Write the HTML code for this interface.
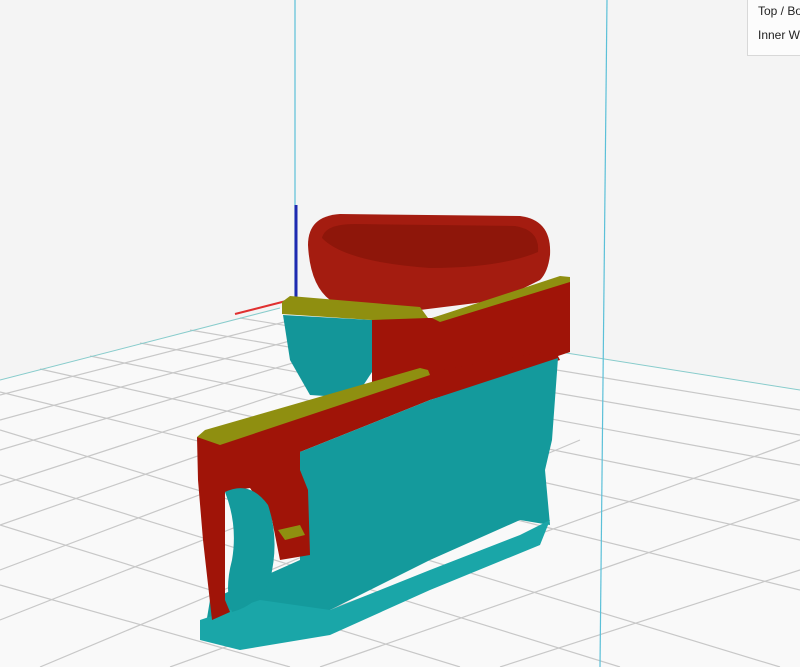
<!DOCTYPE html>
<html><head><style>
html,body{margin:0;padding:0;width:800px;height:667px;overflow:hidden;background:#f4f4f4;font-family:"Liberation Sans",sans-serif}
.leg{position:absolute;left:747px;top:-2px;width:60px;height:56px;background:#fcfcfc;border:1px solid #d8d8d8;font-size:12px;color:#222}
.leg div{position:absolute;left:10px;white-space:nowrap}
</style></head><body>
<svg width="800" height="667" style="position:absolute;left:0;top:0">
<polygon points="0,380 280,308 800,390 800,667 0,667" fill="#f9f9f9"/>
<g stroke="#c8c8c8" stroke-width="1.2" fill="none">
<line x1="0" y1="395" x2="300" y2="318"/><line x1="0" y1="420" x2="330" y2="330"/>
<line x1="0" y1="450" x2="360" y2="343"/><line x1="0" y1="485" x2="390" y2="358"/>
<line x1="0" y1="525" x2="430" y2="375"/><line x1="0" y1="570" x2="470" y2="393"/>
<line x1="0" y1="620" x2="520" y2="415"/><line x1="40" y1="667" x2="580" y2="440"/>
<line x1="170" y1="667" x2="800" y2="440"/><line x1="320" y1="667" x2="800" y2="500"/>
<line x1="500" y1="667" x2="800" y2="570"/>
<line x1="240" y1="318" x2="800" y2="410"/><line x1="190" y1="330" x2="800" y2="435"/>
<line x1="140" y1="343" x2="800" y2="465"/><line x1="90" y1="356" x2="800" y2="500"/>
<line x1="40" y1="369" x2="800" y2="540"/><line x1="0" y1="392" x2="800" y2="590"/>
<line x1="0" y1="430" x2="780" y2="667"/><line x1="0" y1="475" x2="620" y2="667"/>
<line x1="0" y1="525" x2="460" y2="667"/><line x1="0" y1="585" x2="290" y2="667"/>
</g>
<line x1="0" y1="380" x2="280" y2="308" stroke="#8cc" stroke-width="1"/>
<line x1="560" y1="352" x2="800" y2="390" stroke="#8cc" stroke-width="1"/>
<line x1="295" y1="0" x2="295" y2="310" stroke="#5bc0d8" stroke-width="1.2"/>
<line x1="607" y1="0" x2="600" y2="667" stroke="#5bc0d8" stroke-width="1.2"/>
<line x1="296" y1="205" x2="296" y2="300" stroke="#1e2ab0" stroke-width="3"/>
<line x1="235" y1="314" x2="290" y2="300" stroke="#e03030" stroke-width="2"/>
<!-- bowl -->
<path d="M308,245 Q308,216 340,214 L520,216 Q552,220 550,255 Q548,272 540,280 L500,300 L420,310 L330,300 Q310,285 308,245 Z" fill="#a41c10"/>
<path d="M322,238 Q325,224 355,224 L515,226 Q540,230 538,252 Q500,268 430,268 Q345,262 322,238 Z" fill="#8e160a"/>
<!-- upper teal -->
<polygon points="283,315 372,320 372,372 355,398 310,395 290,360" fill="#139699"/>
<!-- upper right red block -->
<polygon points="372,318 432,318 570,277 570,352 555,357 430,385 372,385" fill="#a01408"/>
<polygon points="432,318 560,276 570,277 570,282 440,322" fill="#8f8f10"/>
<!-- upper left yellow -->
<polygon points="282,302 290,296 420,307 428,318 372,320 282,314" fill="#8f8f10"/>
<!-- lower bar red face -->
<polygon points="210,440 430,372 555,350 560,360 430,400 300,452 300,470 210,480" fill="#a01408"/>
<!-- big teal -->
<polygon points="300,452 430,400 558,358 552,440 545,470 550,525 520,520 430,560 330,610 300,630 225,640 205,630 210,600 300,560" fill="#149a9c"/>
<polygon points="200,620 260,600 330,610 430,570 520,535 550,520 540,545 430,590 330,635 240,650 200,640" fill="#1aa6a8"/>
<!-- left red piece -->
<polygon points="197,437 300,445 300,470 308,490 310,555 280,560 272,520 250,488 225,492 225,600 230,612 212,620 203,540 198,480" fill="#a01408"/>
<path d="M225,492 Q250,480 268,505 Q280,540 270,580 Q258,605 232,612 Q224,590 232,560 Q238,525 225,492 Z" fill="#149a9c"/>
<polygon points="278,530 300,525 305,535 285,540" fill="#8f8f10"/>
<!-- lower yellow bar -->
<polygon points="197,437 205,430 420,368 428,370 430,375 220,445" fill="#8f8f10"/>
</svg>
<div class="leg"><div style="top:5px">Top / Bottom</div><div style="top:29px">Inner Wall</div></div>
</body></html>
